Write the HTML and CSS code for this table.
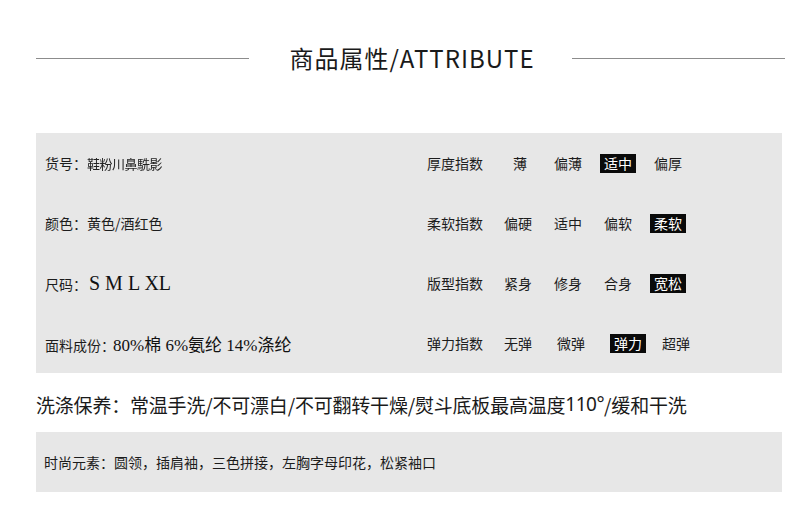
FILE: index.html
```html
<!DOCTYPE html>
<html lang="zh-CN">
<head>
<meta charset="utf-8">
<title>商品属性</title>
<link rel="stylesheet" href="styles.css">
</head>
<body>
<div class="page">
  <header class="heading">
    <span class="rule"></span>
    <h1 class="title">商品属性/ATTRIBUTE</h1>
    <span class="rule"></span>
  </header>

  <section class="attrs">
    <div class="row">
      <div class="left">货号：<span class="code">鞋粉川鼻駪影</span></div>
      <div class="scale scale-a">
        <span class="label">厚度指数</span>
        <span class="opt opt-thin">薄</span>
        <span class="opt">偏薄</span>
        <span class="opt on">适中</span>
        <span class="opt">偏厚</span>
      </div>
    </div>
    <div class="row">
      <div class="left">颜色：黄色/酒红色</div>
      <div class="scale scale-a">
        <span class="label">柔软指数</span>
        <span class="opt">偏硬</span>
        <span class="opt">适中</span>
        <span class="opt">偏软</span>
        <span class="opt on">柔软</span>
      </div>
    </div>
    <div class="row">
      <div class="left">尺码：<span class="serif size">S M L XL</span></div>
      <div class="scale scale-a">
        <span class="label">版型指数</span>
        <span class="opt">紧身</span>
        <span class="opt">修身</span>
        <span class="opt">合身</span>
        <span class="opt on">宽松</span>
      </div>
    </div>
    <div class="row">
      <div class="left">面料成份：<span class="serif fabric">80%棉 6%氨纶 14%涤纶</span></div>
      <div class="scale scale-b">
        <span class="label">弹力指数</span>
        <span class="opt">无弹</span>
        <span class="opt">微弹</span>
        <span class="opt on">弹力</span>
        <span class="opt">超弹</span>
      </div>
    </div>
  </section>

  <p class="care">洗涤保养：常温手洗/不可漂白/不可翻转干燥/熨斗底板最高温度<span class="num">110°</span>/缓和干洗</p>

  <section class="elements">时尚元素：圆领，插肩袖，三色拼接，左胸字母印花，松紧袖口</section>
</div>
</body>
</html>
```

FILE: styles.css
```css
* { box-sizing: border-box; }

html, body {
  margin: 0;
  padding: 0;
  background: #ffffff;
}

body {
  font-family: "Noto Sans CJK SC", "Noto Sans", sans-serif;
  color: #1c1c1c;
}

.page {
  padding: 38px 0 0 36px;
  width: 792px;
}

.heading {
  display: flex;
  align-items: center;
  width: 749px;
  height: 40px;
}

.rule {
  flex: 1;
  height: 1px;
  background: #8c8c8c;
}

.title {
  margin: 0 37px 0 40px;
  font-size: 24px;
  font-weight: 400;
  letter-spacing: 1px;
  line-height: 40px;
  color: #1a1a1a;
  white-space: nowrap;
}

.attrs {
  margin-top: 55px;
  width: 746px;
  background: #e7e7e7;
}

.row {
  display: flex;
  align-items: center;
  height: 60px;
}

.left {
  width: 391px;
  padding-left: 9px;
  font-size: 14px;
  white-space: nowrap;
  display: flex;
  align-items: baseline;
}

.code {
  font-size: 13px;
  color: #222;
  filter: blur(0.6px);
  letter-spacing: -0.5px;
}

.serif {
  font-family: "Liberation Serif", "Noto Sans CJK SC", serif;
  color: #111;
}

.size {
  font-size: 20px;
  margin-left: 2px;
}

.fabric {
  font-size: 17px;
  margin-left: -2px;
}

.scale {
  display: grid;
  align-items: center;
  font-size: 14px;
  white-space: nowrap;
}

.scale-a {
  grid-template-columns: 77px 50px 50px 50px 50px;
}

.scale-b {
  grid-template-columns: 77px 53px 57px 48px 50px;
}

.opt-thin {
  padding-left: 9px;
}

.opt {
  line-height: 19px;
}

.opt.on {
  justify-self: start;
  margin-left: -4px;
  padding: 0 4px;
  background: #0a0a0a;
  color: #ffffff;
}

.care {
  margin: 0;
  height: 59px;
  padding-top: 3px;
  display: flex;
  align-items: center;
  font-size: 19px;
  letter-spacing: -0.2px;
  color: #1a1a1a;
  white-space: nowrap;
}

.num {
  font-family: "Noto Sans", "Noto Sans CJK SC", sans-serif;
  letter-spacing: -0.5px;
}

.elements {
  width: 746px;
  height: 60px;
  padding-left: 8px;
  display: flex;
  align-items: center;
  background: #e7e7e7;
  font-size: 14px;
  color: #1c1c1c;
}
```
